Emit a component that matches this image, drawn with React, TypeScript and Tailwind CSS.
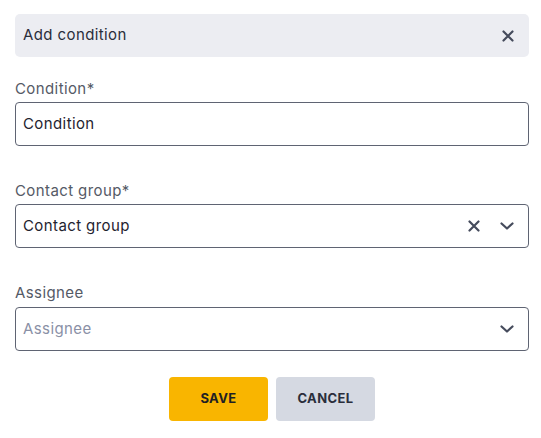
import React from "react";

const XIcon = ({ className = "" }: { className?: string }) => (
  <svg width="12" height="12" viewBox="0 0 12 12" className={className} fill="none">
    <path d="M1.5 1.5L10.5 10.5M10.5 1.5L1.5 10.5" stroke="#454b5c" strokeWidth="2.2" strokeLinecap="round" />
  </svg>
);

const Chevron = () => (
  <svg width="14" height="8" viewBox="0 0 14 8" fill="none">
    <path d="M1.5 1.5L7 6.5L12.5 1.5" stroke="#454b5c" strokeWidth="2.2" strokeLinecap="round" strokeLinejoin="round" />
  </svg>
);

export default function App() {
  return (
    <div
      className="w-[541px] h-[438px] bg-white pl-[15px] pr-[12px] pt-[14px] tracking-[0.4px]"
      style={{ fontFamily: "Inter, 'Open Sans', sans-serif" }}
    >
      <div className="h-[43px] rounded-[5px] bg-[#ecedf2] flex items-center justify-between pl-[8px] pr-[15px]">
        <span className="text-[15px] text-[#2a2e3b]">Add condition</span>
        <XIcon />
      </div>

      <div className="mt-[22px] text-[15px] leading-[20px] text-[#555a66]">Condition*</div>
      <div className="mt-[3px] h-[44px] rounded-[4px] border border-[#5f6473] flex items-center px-[7px]">
        <span className="text-[15px] text-[#1f2330]">Condition</span>
      </div>

      <div className="mt-[35px] text-[15px] leading-[20px] text-[#555a66]">Contact group*</div>
      <div className="mt-[3px] h-[44px] rounded-[4px] border border-[#5f6473] flex items-center pl-[7px] pr-[14px]">
        <span className="text-[15px] text-[#1f2330] flex-1">Contact group</span>
        <XIcon className="mr-[20px]" />
        <Chevron />
      </div>

      <div className="mt-[35px] text-[15px] leading-[20px] text-[#555a66]">Assignee</div>
      <div className="mt-[4px] h-[44px] rounded-[4px] border border-[#5f6473] flex items-center pl-[7px] pr-[14px]">
        <span className="text-[15px] text-[#8a90a6] flex-1">Assignee</span>
        <Chevron />
      </div>

      <div className="mt-[26px] flex justify-center gap-[8px]">
        <button className="w-[99px] h-[44px] rounded-[4px] bg-[#f9b500] text-[13px] font-bold text-[#1f1f24]">
          SAVE
        </button>
        <button className="w-[99px] h-[44px] rounded-[4px] bg-[#d5d9e2] text-[13px] font-bold text-[#2a2e3b]">
          CANCEL
        </button>
      </div>
    </div>
  );
}
